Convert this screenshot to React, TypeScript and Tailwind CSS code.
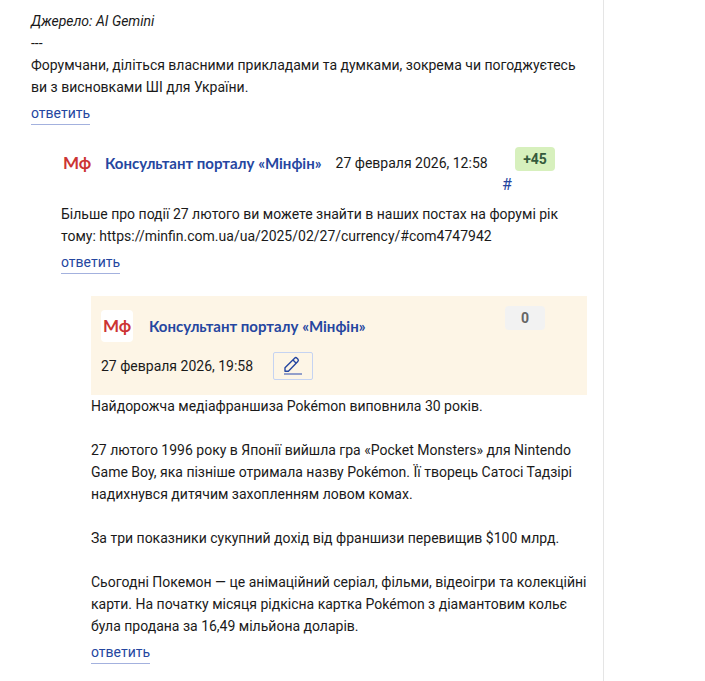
import type { ReactNode } from "react";
import clsx from "clsx";

const AUTHOR = "Консультант порталу «Мінфін»";

function ReplyLink() {
  return (
    <a href="#reply" className="mt-1 inline-block border-b border-[#a3b1de] text-[#2546a0]">
      ответить
    </a>
  );
}

function Avatar() {
  return (
    <span className="flex h-8 w-8 shrink-0 items-center justify-center rounded bg-white font-[Lato,'Open_Sans',sans-serif] text-[17px] font-bold leading-8 text-[#cc3433]">
      Мф
    </span>
  );
}

function AuthorLink() {
  return (
    <a
      href="#author"
      className="whitespace-nowrap font-[Lato,'Open_Sans',sans-serif] text-[15px] font-bold text-[#2546a0]"
    >
      {AUTHOR}
    </a>
  );
}

function Rating({ value }: { value: number }) {
  return (
    <span
      className={clsx(
        "ml-[13px] block h-6 w-10 rounded text-center font-bold leading-6",
        value > 0 ? "bg-[#d7f0bd] text-[#355a3c]" : "bg-[#f2f2f2] text-[#666666]"
      )}
    >
      {value > 0 ? `+${value}` : value}
    </span>
  );
}

function EditIcon() {
  return (
    <svg className="h-5 w-5" viewBox="0 0 20 20" fill="none">
      <path
        d="M2 15.2v-3.4L11.6 2.2a1.7 1.7 0 0 1 2.4 0l.8.8a1.7 1.7 0 0 1 0 2.4L5.4 15.2H2zM10 4l3.2 3.2"
        stroke="#2546a0"
        strokeWidth={1.4}
        strokeLinejoin="round"
      />
      <path d="M1 18h18" stroke="#939fca" strokeWidth={2} />
    </svg>
  );
}

function CommentBody({ children }: { children: ReactNode }) {
  return <div className="space-y-[22px]">{children}</div>;
}

export default function App() {
  return (
    <div className="flex min-h-screen bg-white font-[Roboto,sans-serif] text-[14px] leading-[22px] text-[#1a1a1a]">
      <main className="min-w-0 flex-1 border-r border-[#e5e5e5] pb-4 pl-[31px] pr-4 pt-[10px]">
        <article>
          <p className="italic">Джерело: AI Gemini</p>
          <p>---</p>
          <p>
            Форумчани, діліться власними прикладами та думками, зокрема чи погоджуєтесь ви з
            висновками ШІ для України.
          </p>
          <ReplyLink />
        </article>

        <div className="ml-[30px] mt-[22px]">
          <article>
            <header className="flex items-start pb-[7px]">
              <div className="flex flex-1 items-center">
                <Avatar />
                <div className="ml-3 flex items-center gap-[14px]">
                  <AuthorLink />
                  <time className="whitespace-nowrap">27 февраля 2026, 12:58</time>
                </div>
              </div>
              <div className="w-[85px] shrink-0">
                <Rating value={45} />
                <a href="#com4747942" className="mt-[3px] block text-[16px] text-[#2546a0]">
                  #
                </a>
              </div>
            </header>
            <p>
              Більше про події 27 лютого ви можете знайти в наших постах на форумі рік тому:
              https://minfin.com.ua/ua/2025/02/27/currency/#com4747942
            </p>
            <ReplyLink />
          </article>

          <article className="ml-[30px] mt-[22px]">
            <header className="flex items-start bg-[#fdf5e6] px-[10px] pb-[15px] pt-[10px]">
              <div className="flex-1 pt-1">
                <div className="flex items-center gap-4">
                  <Avatar />
                  <AuthorLink />
                </div>
                <div className="mt-[10px] flex items-center gap-5">
                  <time>27 февраля 2026, 19:58</time>
                  <button
                    type="button"
                    aria-label="Редактировать"
                    className="flex h-7 w-10 items-center justify-center rounded-xs border border-[#c5d3f2]"
                  >
                    <EditIcon />
                  </button>
                </div>
              </div>
              <div className="w-[85px] shrink-0">
                <Rating value={0} />
              </div>
            </header>
            <CommentBody>
              <p>Найдорожча медіафраншиза Pokémon виповнила 30 років.</p>
              <p>
                27 лютого 1996 року в Японії вийшла гра «Pocket Monsters» для Nintendo Game Boy,
                яка пізніше отримала назву Pokémon. Її творець Сатосі Тадзірі надихнувся дитячим
                захопленням ловом комах.
              </p>
              <p>За три показники сукупний дохід від франшизи перевищив $100 млрд.</p>
              <p>
                Сьогодні Покемон — це анімаційний серіал, фільми, відеоігри та колекційні карти.
                На початку місяця рідкісна картка Pokémon з діамантовим кольє була продана за
                16,49 мільйона доларів.
              </p>
            </CommentBody>
            <ReplyLink />
          </article>
        </div>
      </main>
      <aside className="w-[101px] shrink-0" />
    </div>
  );
}
